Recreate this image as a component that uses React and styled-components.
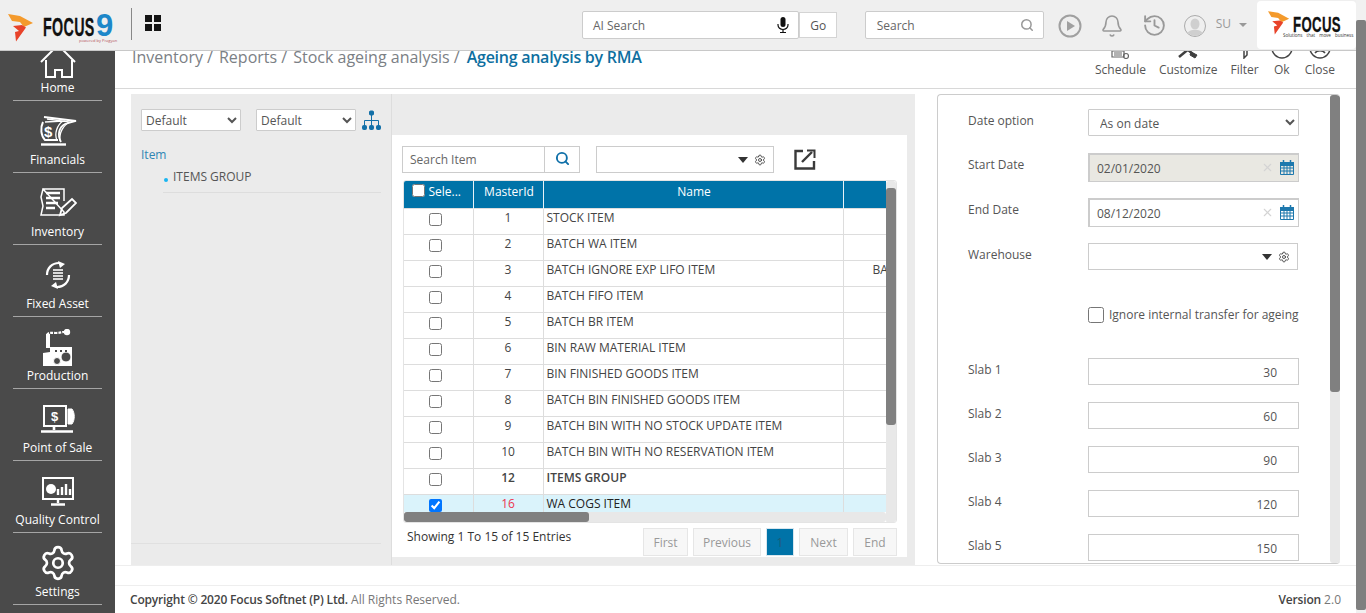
import React from "react";
import styled, { createGlobalStyle } from "styled-components";
import { Bell, History, Search, Settings, X } from "lucide-react";

const Global = createGlobalStyle`
  * { box-sizing: border-box; }
  html, body { margin: 0; padding: 0; height: 100%; overflow: hidden; background: #fff; }
  body { font-family: "Open Sans", "Liberation Sans", sans-serif; font-size: 12px; color: #444; }
`;

const Page = styled.div`display: flex; width: 1366px; height: 613px; overflow: hidden;`;
const Shell = styled.div`flex: 1; min-width: 0; display: flex; flex-direction: column;`;
const PageTrack = styled.div`width: 10px; background: #f1f1f1; padding-top: 20px;`;
const PageThumb = styled.div`height: 590px; background: #7f7f7f; border-radius: 2px;`;

/* header */
const Header = styled.header`
  position: relative; z-index: 2; height: 51px; flex: none; background: #efefef; border-bottom: 1px solid #c8c8c8;
  display: flex; align-items: center;
`;
const BrandBox = styled.div`position: relative; width: 115px; flex: none; padding-left: 8px; display: flex; align-items: flex-start; height: 50px; padding-top: 14px;`;
const BrandWord = styled.span`
  display: inline-block; width: ${p => p.$w}px; margin-left: ${p => p.$ml}px; margin-top: ${p => p.$mt || 0}px; white-space: nowrap;
  font: 700 ${p => p.$size}px/${p => p.$lh}px "Liberation Sans", sans-serif; color: #111; letter-spacing: .6px;
  -webkit-text-stroke: .3px #111; transform: scaleX(${p => p.$sx}); transform-origin: left center;
`;
const Nine = styled.span`
  font: 700 31px/22px "Liberation Sans", sans-serif; color: #1d87c9; margin-left: 3px; margin-top: 1px;
`;
const Powered = styled.span`
  position: absolute; left: 79px; top: 38px; font-size: 4px; line-height: 5px; color: #b5525a; white-space: nowrap;
`;
const HeadDivider = styled.div`width: 1px; height: 32px; background: #888; margin-left: 16px; margin-bottom: 3px;`;
const AppGrid = styled.div`
  margin-left: 13px; margin-bottom: 5px; width: 16px; height: 16px; display: grid; grid-template-columns: 7px 7px; grid-auto-rows: 7px; gap: 2px;
  & > i { display: block; background: #151515; }
`;
const Field = styled.div`
  display: flex; align-items: center; width: ${p => p.$w}px; height: 28px; margin-left: ${p => p.$ml || 0}px; flex: none;
  background: #fff; border: 1px solid #ccc; border-radius: 2px; padding: 0 ${p => p.$pr || 10}px 0 ${p => p.$pl || 10}px; color: #666; font-size: 12px;
  & > span { flex: 1; }
`;
const GoButton = styled.div`
  width: 38px; height: 26px; padding-left: 1px; background: #fff; border: 1px solid #d4d4d4; display: flex; align-items: center; justify-content: center; color: #555; font-size: 12px;
`;
const HeadIcon = styled.div`margin-left: ${p => p.$ml}px; display: flex; color: #999; flex: none; margin-top: 1px;`;
const UserName = styled.span`margin-left: 10px; color: #999; font-size: 12px; margin-bottom: 3px;`;
const Caret = styled.i`
  display: block; width: 0; height: 0; margin-left: ${p => p.$ml}px; flex: none;
  border-left: ${p => p.$w}px solid transparent; border-right: ${p => p.$w}px solid transparent; border-top: ${p => p.$h}px solid ${p => p.$c};
`;
const LogoCard = styled.div`
  position: relative; margin-left: 10px; width: 99px; height: 48px; background: #fff; border-radius: 4px; flex: none; padding: 10px 0 0 11px; display: flex; align-items: flex-start;
`;
const Tagline = styled.span`position: absolute; left: 26px; top: 32px; font-size: 4.5px; line-height: 5px; color: #333; white-space: nowrap; word-spacing: 3px;`;

/* body */
const Body = styled.div`flex: 1; min-height: 0; display: flex;`;
const Sidebar = styled.nav`
  width: 115px; flex: none; background: #4a4a4a; display: flex; flex-direction: column; justify-content: flex-end; overflow: hidden; padding: 0 13px 8px;
`;
const NavItem = styled.div`
  height: 72px; flex: none; display: flex; flex-direction: column; align-items: center; justify-content: flex-end; border-bottom: 1px solid #a5a5a5; color: #fff;
`;
const NavIcon = styled.div`height: 38px; display: flex; align-items: ${p => p.$align || "center"}; justify-content: center; color: #fff;`;
const NavLabel = styled.span`font-size: 12px; line-height: 16px; margin: 2px -12px 4px; white-space: nowrap;`;

const Main = styled.main`flex: 1; min-width: 0; display: flex; flex-direction: column; background: #fff;`;
const TitleBar = styled.div`
  height: 38px; flex: none; display: flex; justify-content: space-between; align-items: flex-start; border-bottom: 1px solid #d8d8d8; padding: 0 21px 0 17px;
`;
const Crumbs = styled.div`display: flex; gap: 6px; font-size: 16px; line-height: 12px; color: #7b8085; white-space: nowrap;`;
const CrumbActive = styled.span`color: #0e6f9f; font-weight: 600; letter-spacing: -.26px; margin-left: 1px;`;
const Actions = styled.div`height: 37px; overflow: hidden; display: flex; gap: 12px; align-items: flex-end; padding-bottom: 10px;`;
const Action = styled.div`
  display: flex; flex-direction: column; align-items: center; color: #555; font-size: 12px; line-height: 16px; gap: 3px; margin-right: ${p => p.$mr || 0}px;
  & > svg { flex: none; }
`;

const Content = styled.div`
  height: 477px; flex: none; padding: 5px 0 0 16px; display: flex; gap: 22px; border-bottom: 1px solid #eee;
`;
const LeftPanel = styled.section`width: 784px; height: 471px; flex: none; background: #ebebeb; display: flex;`;
const TreePane = styled.div`width: 261px; flex: none; border-right: 1px solid #ddd; display: flex; flex-direction: column; padding: 15px 10px 0 10px;`;
const TreeTools = styled.div`display: flex; align-items: center; gap: 15px;`;
const NativeSelect = styled.select`
  width: ${p => p.$w}px; height: ${p => p.$h}px; flex: none; background: #fff; border: 1px solid #ccc; border-radius: 1px; font: 12px "Open Sans", sans-serif; color: #555; padding: ${p => p.$pt || 0}px 0 0 ${p => p.$pl}px; outline: none;
`;
const TreeRoot = styled.div`color: #2f86b4; margin-top: 15px; line-height: 18px;`;
const TreeChild = styled.div`
  margin: 4px 0 0 22px; height: 25px; padding: 0 0 0 10px; line-height: 18px; border-bottom: 1px solid #ddd; color: #555; position: relative;
  &::before { content: ""; position: absolute; left: 1px; top: 10px; width: 4px; height: 4px; border-radius: 50%; background: #19b5f1; }
`;
const TreeFoot = styled.div`margin: auto 0 21px -10px; border-top: 1px solid #e0e0e0;`;

const GridPane = styled.div`flex: 1; min-width: 0; padding: 41px 8px 8px 0;`;
const GridCard = styled.div`height: 422px; background: #fff; padding: 11px 10px 0 10px; display: flex; flex-direction: column;`;
const GridTools = styled.div`display: flex; align-items: center; height: 27px; flex: none;`;
const SearchBox = styled.div`width: 178px; height: 27px; flex: none; display: flex; border: 1px solid #ccc; color: #666; & > span { flex: 1; line-height: 25px; padding-left: 7px; border-right: 1px solid #ccc; }`;
const SearchBtn = styled.div`width: 34px; display: flex; align-items: center; justify-content: center; color: #0e6fa8; margin-top: -2px;`;
const Combo = styled.div`
  width: ${p => p.$w}px; height: 27px; margin-left: ${p => p.$ml || 0}px; flex: none; display: flex; align-items: center; justify-content: flex-end; gap: 6px; background: #fff; border: 1px solid #ccc; padding-right: 7px; color: #444;
`;
const Frame = styled.div`
  margin: 7px 0 0 1px; flex: none; height: 343px; border: 1px solid #e4e4e4; border-radius: 3px; display: grid; grid-template-columns: 1fr 10px; grid-template-rows: 331px 11px; overflow: hidden;
`;
const TableView = styled.div`overflow: hidden;`;
const Table = styled.table`width: 639px; table-layout: fixed; border-collapse: collapse;`;
const Th = styled.th`
  height: 27px; padding: 0 2px 5px 4px; background: #0073a8; color: #fff; font-weight: 400; font-size: 12px; border-right: 1px solid #e8f2f7; white-space: nowrap; text-align: center; vertical-align: middle;
`;
const Td = styled.td`
  height: 26px; padding: 0 3px 7px; border: 1px solid #ddd; border-left: 0; color: ${p => p.$sel ? "#222" : "#444"}; background: ${p => p.$sel ? "#daf3fb" : "#fff"}; font-weight: ${p => p.$bold ? 600 : 400}; text-align: ${p => p.$center ? "center" : "left"}; white-space: nowrap; overflow: hidden; vertical-align: middle; line-height: 16px;
`;
const IdCell = styled(Td)`color: ${p => p.$sel ? "#ec3350" : "#444"};`;
const ExtraCell = styled(Td)`padding-left: 29px;`;
const RowCheck = styled.input`width: 13px; height: 13px; display: block; margin: 4px auto 1px; position: relative; left: -3px;`;
const HeadCheck = styled.input`margin: 0 3px 4px -5px; width: 13px; height: 13px; vertical-align: middle;`;

const VTrack = styled.div`grid-row: 1 / 3; grid-column: 2; background: #e8e8e8; border-radius: 3px; padding-top: 7px;`;
const HTrack = styled.div`background: #e8e8e8; border-radius: 3px; height: 10px;`;
const Thumb = styled.div`background: #808080; border-radius: 3px; height: ${p => p.$h}; width: ${p => p.$w};`;

const PagerRow = styled.div`display: flex; justify-content: space-between; margin: 5px 0 0 5px;`;
const Showing = styled.span`color: #333; line-height: 16px; margin-top: 1px;`;
const Pager = styled.div`display: flex; gap: 5px;`;
const PageBtn = styled.div`
  height: 28px; width: ${p => p.$w}px; flex: none; display: flex; align-items: center; justify-content: center; font-size: 12px;
  background: ${p => p.$on ? "#0073a8" : "#f7f7f7"}; border: 1px solid ${p => p.$on ? "#d8e6ee" : "#e6e6e6"}; color: ${p => p.$on ? "#1f5a78" : "#999"};
`;

const RightPanel = styled.section`
  width: 403px; height: 470px; flex: none; display: flex; border: 1px solid #ccc; border-radius: 4px; overflow: hidden; border-right: 0;
`;
const Form = styled.div`flex: 1; min-width: 0; padding: 14px 0 0 30px;`;
const FormRow = styled.div`display: grid; grid-template-columns: 120px 211px; margin-bottom: ${p => p.$gap}px;`;
const Label = styled.span`line-height: 22px; padding-top: 1px; color: #555;`;
const DateField = styled.div`
  height: 29px; display: flex; align-items: center; padding: 1px 4px 0 7px; gap: 6px; color: #555; border: 1px solid #ccc; border-left-width: 2px; border-top-width: 2px;
  background: ${p => p.$off ? "#e9e8e2" : "#fff"}; & > span { flex: 1; } & > svg { margin-top: -3px; }
`;
const CheckLabel = styled.label`display: flex; align-items: flex-start; gap: 5px; height: 17px; color: #555; white-space: nowrap; line-height: 16px;`;
const BigCheck = styled.input`margin: 0; width: 16px; height: 16px; flex: none;`;
const NumField = styled.div`height: 27px; border: 1px solid #ccc; text-align: right; padding: 5px 21px 0 0; line-height: 18px; color: #555; background: #fff;`;
const FormTrack = styled.div`width: 10px; flex: none; background: #e8e8e8; border-radius: 3px;`;

const Footer = styled.footer`
  margin-top: 19px; flex: 1; display: flex; justify-content: space-between; align-items: center; padding: 0 15px; border-top: 1px solid #eee; color: #777; font-size: 12px;
`;
const Strong = styled.b`font-weight: 600; color: #444; letter-spacing: -.18px;`;

/* drawings */
const Flame = ({ w = 26, h = 28 }) => (
  <svg width={w} height={h} viewBox="0 0 26 28" style={{ flex: "none" }}>
    <path d="M0 0 L12 2 L25 9 L16 13 L12 8 L4 7 Z" fill="#f49a2c" />
    <path d="M5 12 L14 11 L18 13.500 L8 27.500 L7 18 L11 17 Z" fill="#e8432a" />
  </svg>
);
const MicIcon = () => (
  <svg width="12" height="16" viewBox="0 0 12 16" fill="none" stroke="#111" style={{ flex: "none" }}>
    <rect x="3.500" y="0" width="5" height="10" rx="2.500" fill="#111" stroke="none" />
    <path d="M1 7V8A5 4.500 0 0 0 11 8V7M6 13V15M3 15.500H9" strokeWidth="1.200" />
  </svg>
);
const Gear = ({ s = 12 }) => <Settings size={s} strokeWidth={1.8} color="#444" />;
const Down = () => <Caret $ml={0} $w={5.5} $h={6} $c="#333" />;
const Calendar = () => (
  <svg width="14" height="15" viewBox="0 0 14 15" style={{ flex: "none" }} fill="none" stroke="#1d78ad">
    <path d="M0 2.500h14v3H0z" fill="#1d78ad" />
    <path d="M3.500 0v3M10.500 0v3" strokeWidth="1.500" />
    <path d="M.5 5v9.500h13V5M4 5v9.500M7 5v9.500M10 5v9.500M.5 8h13M.5 11h13" strokeWidth="1" />
  </svg>
);
const ClearX = () => <X size={13} color="#d4d4d4" strokeWidth={2} style={{ flex: "none" }} />;

const HomeIcon = () => (
  <svg width="38" height="38" viewBox="0 0 38 38" fill="none" stroke="#fff" strokeWidth="2">
    <path d="M2 22 L19 5 L36 22M7 20V37H16V30H23V37H33V20" />
  </svg>
);
const FinIcon = () => (
  <svg width="38" height="30" viewBox="0 0 38 30" fill="none" stroke="#fff" strokeWidth="1.600">
    <path d="M2 28.500H27" strokeWidth="2.400" />
    <path d="M4 6C1 12 2 20 6 24H19" strokeWidth="2" />
    <path d="M5 1L37 5 26 8C20 11 18 19 22 26" strokeWidth="1.800" />
    <path d="M6 6L24 5C18 9 15 18 18 24M8 3L31 6C24 9 20 17 21 25" strokeWidth="1.300" />
    <text x="5" y="21" fontFamily="Liberation Sans" fontWeight="700" fontSize="15" fill="#fff" stroke="none">$</text>
  </svg>
);
const InvIcon = () => (
  <svg width="38" height="31" viewBox="0 0 38 31" fill="none" stroke="#fff" strokeWidth="1.500">
    <path d="M4 1H25V13M25 24V27H2L4 18 2 9 4 1Z" />
    <path d="M7 5H21M7 10H21M7 15H19M7 20H16" strokeWidth="2.500" />
    <path d="M21 27L23 20 33 11 37 15 27 25Z" strokeWidth="1.800" />
  </svg>
);
const FixedIcon = () => (
  <svg width="26" height="28" viewBox="0 0 26 28" fill="none" stroke="#fff">
    <path d="M2 14C2 7 7 2 14 2" strokeWidth="2.200" />
    <path d="M13 0L20 3 15 7Z" fill="#fff" stroke="none" />
    <path d="M24 14C24 21 19 26 12 26" strokeWidth="2.200" />
    <path d="M13 28L6 25 11 21Z" fill="#fff" stroke="none" />
    <path d="M8 9H18M8 12H18M8 15H18M8 18H18" strokeWidth="2" stroke="#d8d8d8" />
  </svg>
);
const ProdIcon = () => (
  <svg width="32" height="37" viewBox="0 0 32 37">
    <path d="M4 5H8V19H4Z" fill="#fff" />
    <path d="M5 6C6 3 10 4 14 4S20 3 22 3" stroke="#fff" strokeWidth="2.200" fill="none" strokeDasharray="3 1" />
    <circle cx="25" cy="3" r="3.200" fill="#fff" />
    <path d="M1 24V37H30V18H8V23Z" fill="#fff" />
    <circle cx="24" cy="28" r="5" fill="#4a4a4a" stroke="#fff" strokeWidth="1" />
    <circle cx="15" cy="32" r="3.500" fill="#4a4a4a" stroke="#fff" strokeWidth="1" />
    <path d="M13 22h2M18 22h2M23 22h2" stroke="#4a4a4a" strokeWidth="2" />
  </svg>
);
const PosIcon = () => (
  <svg width="36" height="28" viewBox="0 0 36 28" fill="none" stroke="#fff">
    <path d="M4 1H26V21H4Z" strokeWidth="2" />
    <path d="M28 4H32C35 8 35 15 32 19H28Z" fill="#fff" strokeWidth="1" />
    <path d="M14 21V25M1 26.500H33" strokeWidth="2.600" />
    <text x="11" y="16" fontFamily="Liberation Sans" fontWeight="700" fontSize="13" fill="#fff" stroke="none">$</text>
  </svg>
);
const QualityIcon = () => (
  <svg width="32" height="29" viewBox="0 0 32 29" fill="none" stroke="#fff">
    <path d="M1 1H31V22H1Z" strokeWidth="2" />
    <circle cx="9" cy="12" r="5" fill="#fff" stroke="none" />
    <path d="M16 18V12M20 18V10M24 18V7M28 18V12" strokeWidth="2.400" />
    <path d="M16 23V26M9 27.500H23" strokeWidth="2.400" />
  </svg>
);
const PlayIcon = () => (
  <svg width="24" height="24" viewBox="0 0 24 24" fill="none" stroke="#a0a0a0" strokeWidth="2">
    <circle cx="12" cy="12" r="10.500" />
    <path d="M9 7L17 12 9 17Z" fill="#a0a0a0" stroke="none" />
  </svg>
);
const Avatar = () => (
  <svg width="22" height="22" viewBox="0 0 22 22">
    <circle cx="11" cy="11" r="10.500" fill="#efefef" stroke="#aaa" />
    <clipPath id="av"><circle cx="11" cy="11" r="10" /></clipPath>
    <g clipPath="url(#av)" fill="#cfcfcf">
      <ellipse cx="11" cy="9" rx="4.500" ry="5.500" />
      <path d="M2 22C3 15 8 15 11 15S19 15 20 22Z" />
    </g>
  </svg>
);
const TreeIcon = () => (
  <svg width="19" height="21" viewBox="0 0 19 21" fill="#1370a8" stroke="#1370a8" style={{ flex: "none", marginLeft: -9 }}>
    <rect x="7.500" y="1" width="4" height="4" rx="1" />
    <path d="M9.500 5V15M2.500 15V10.500H16.500V15" fill="none" />
    <rect x="0.500" y="15.500" width="4" height="4" rx="1" />
    <rect x="7.500" y="15.500" width="4" height="4" rx="1" />
    <rect x="14.500" y="15.500" width="4" height="4" rx="1" />
  </svg>
);
const ExportIcon = () => (
  <svg width="22" height="21" viewBox="0 0 22 21" fill="none" stroke="#3a3a3a" strokeWidth="2.400" style={{ marginLeft: 20, flex: "none" }}>
    <path d="M9 2H1.500V19.500H20V12" />
    <path d="M8 13L18 3" />
    <path d="M13 1.500H20.500V9" strokeWidth="2" />
  </svg>
);
const ScheduleIcon = () => (
  <svg width="18" height="22" viewBox="0 0 18 22" fill="none" stroke="#666" strokeWidth="1.200">
    <path d="M1 14H13V20H1ZM3 16h8M3 18h8" />
    <circle cx="15" cy="19" r="2.500" />
  </svg>
);
const CustomizeIcon = () => (
  <svg width="20" height="24" viewBox="0 0 20 24" fill="#3f3f3f" stroke="#3f3f3f">
    <path d="M1 22L18 8" strokeWidth="2.500" />
    <path d="M2 8L16 20" strokeWidth="2.500" />
    <path d="M13 17L19 20 17 23 12 20Z" />
  </svg>
);
const FilterIcon = () => (
  <svg width="14" height="24" viewBox="0 0 14 24" fill="none" stroke="#444" strokeWidth="1.500">
    <path d="M2 4L6 12V23L9 20V12L12 4" />
  </svg>
);
const OkIcon = () => (
  <svg width="22" height="22" viewBox="0 0 22 22" fill="none" stroke="#444" strokeWidth="1.500">
    <circle cx="11" cy="11" r="10" />
  </svg>
);
const CloseIcon = () => (
  <svg width="22" height="22" viewBox="0 0 22 22" fill="none" stroke="#444" strokeWidth="1.500">
    <circle cx="11" cy="11" r="10" />
    <path d="M6 16C8 13 14 13 16 16" />
  </svg>
);

const navItems = [
  ["Home", <HomeIcon />, "flex-end"],
  ["Financials", <FinIcon />],
  ["Inventory", <InvIcon />],
  ["Fixed Asset", <FixedIcon />],
  ["Production", <ProdIcon />],
  ["Point of Sale", <PosIcon />],
  ["Quality Control", <QualityIcon />],
  ["Settings", <Settings size={38} strokeWidth={1.7} />],
];
const rows = [
  [1, "STOCK ITEM"], [2, "BATCH WA ITEM"], [3, "BATCH IGNORE EXP LIFO ITEM", "BATCH"],
  [4, "BATCH FIFO ITEM"], [5, "BATCH BR ITEM"], [6, "BIN RAW MATERIAL ITEM"],
  [7, "BIN FINISHED GOODS ITEM"], [8, "BATCH BIN FINISHED GOODS ITEM"],
  [9, "BATCH BIN WITH NO STOCK UPDATE ITEM"], [10, "BATCH BIN WITH NO RESERVATION ITEM"],
  [12, "ITEMS GROUP", "", "bold"], [16, "WA COGS ITEM", "", "sel"],
];
const slabs = [["Slab 1", 30], ["Slab 2", 60], ["Slab 3", 90], ["Slab 4", 120], ["Slab 5", 150]];
const pages = [["First", 45], ["Previous", 68], ["1", 28, true], ["Next", 49], ["End", 44]];

export default function App() {
  return (
    <Page>
      <Global />
      <Shell>
        <Header>
          <BrandBox>
            <Flame />
            <BrandWord $w={50} $ml={9} $mt={3} $size={26} $lh={20} $sx={0.55}>FOCUS</BrandWord>
            <Nine>9</Nine>
            <Powered>powered by Pragyan</Powered>
          </BrandBox>
          <HeadDivider />
          <AppGrid><i /><i /><i /><i /></AppGrid>
          <Field $w={217} $ml={421} $pr={9}>
            <span>AI Search</span>
            <MicIcon />
          </Field>
          <GoButton>Go</GoButton>
          <Field $w={179} $ml={28} $pl={11} $pr={9}>
            <span>Search</span>
            <Search size={14} color="#999" strokeWidth={2.6} />
          </Field>
          <HeadIcon $ml={14}><PlayIcon /></HeadIcon>
          <HeadIcon $ml={18}><Bell size={24} strokeWidth={1.6} /></HeadIcon>
          <HeadIcon $ml={18}><History size={25} strokeWidth={1.8} /></HeadIcon>
          <HeadIcon $ml={17}><Avatar /></HeadIcon>
          <UserName>SU</UserName>
          <Caret $ml={8} $w={4} $h={4} $c="#999" />
          <LogoCard>
            <Flame w={22} h={24} />
            <BrandWord $w={46} $ml={3} $mt={5} $size={22} $lh={17} $sx={0.6}>FOCUS</BrandWord>
            <Tagline>Solutions that move business</Tagline>
          </LogoCard>
        </Header>
        <Body>
          <Sidebar>
            {navItems.map(([label, icon, align]) => (
              <NavItem key={label}>
                <NavIcon $align={align}>{icon}</NavIcon>
                <NavLabel>{label}</NavLabel>
              </NavItem>
            ))}
          </Sidebar>
          <Main>
            <TitleBar>
              <Crumbs>
                <span>Inventory /</span>
                <span>Reports /</span>
                <span>Stock ageing analysis /</span>
                <CrumbActive>Ageing analysis by RMA</CrumbActive>
              </Crumbs>
              <Actions>
                <Action $mr={1}><ScheduleIcon />Schedule</Action>
                <Action $mr={1}><CustomizeIcon />Customize</Action>
                <Action><FilterIcon />Filter</Action>
                <Action><OkIcon />Ok</Action>
                <Action><CloseIcon />Close</Action>
              </Actions>
            </TitleBar>
            <Content>
              <LeftPanel>
                <TreePane>
                  <TreeTools>
                    <NativeSelect $w={100} $h={22} $pl={0} defaultValue="Default"><option>Default</option></NativeSelect>
                    <NativeSelect $w={100} $h={22} $pl={0} defaultValue="Default"><option>Default</option></NativeSelect>
                    <TreeIcon />
                  </TreeTools>
                  <TreeRoot>Item</TreeRoot>
                  <TreeChild>ITEMS GROUP</TreeChild>
                  <TreeFoot />
                </TreePane>
                <GridPane>
                  <GridCard>
                    <GridTools>
                      <SearchBox>
                        <span>Search Item</span>
                        <SearchBtn><Search size={15} strokeWidth={3} /></SearchBtn>
                      </SearchBox>
                      <Combo $w={178} $ml={16}><Down /><Gear /></Combo>
                      <ExportIcon />
                    </GridTools>
                    <Frame>
                      <TableView>
                        <Table>
                          <colgroup>
                            <col width="69" /><col width="70" /><col width="300" /><col width="200" />
                          </colgroup>
                          <thead>
                            <tr>
                              <Th><HeadCheck type="checkbox" />Sele...</Th>
                              <Th>MasterId</Th>
                              <Th>Name</Th>
                              <Th />
                            </tr>
                          </thead>
                          <tbody>
                            {rows.map(([id, name, extra, kind]) => {
                              const sel = kind === "sel";
                              const bold = kind === "bold";
                              return (
                                <tr key={id}>
                                  <Td $center $sel={sel}><RowCheck type="checkbox" defaultChecked={sel} /></Td>
                                  <IdCell $center $sel={sel} $bold={bold}>{id}</IdCell>
                                  <Td $sel={sel} $bold={bold}>{name}</Td>
                                  <ExtraCell $sel={sel}>{extra}</ExtraCell>
                                </tr>
                              );
                            })}
                          </tbody>
                        </Table>
                      </TableView>
                      <VTrack><Thumb $h="237px" $w="100%" /></VTrack>
                      <HTrack><Thumb $h="100%" $w="185px" /></HTrack>
                    </Frame>
                    <PagerRow>
                      <Showing>Showing 1 To 15 of 15 Entries</Showing>
                      <Pager>
                        {pages.map(([t, w, on]) => <PageBtn key={t} $w={w} $on={on}>{t}</PageBtn>)}
                      </Pager>
                    </PagerRow>
                  </GridCard>
                </GridPane>
              </LeftPanel>
              <RightPanel>
                <Form>
                  <FormRow $gap={17}>
                    <Label>Date option</Label>
                    <NativeSelect $w={211} $h={27} $pl={7} $pt={2} defaultValue="As on date"><option>As on date</option></NativeSelect>
                  </FormRow>
                  <FormRow $gap={16}>
                    <Label>Start Date</Label>
                    <DateField $off><span>02/01/2020</span><ClearX /><Calendar /></DateField>
                  </FormRow>
                  <FormRow $gap={16}>
                    <Label>End Date</Label>
                    <DateField><span>08/12/2020</span><ClearX /><Calendar /></DateField>
                  </FormRow>
                  <FormRow $gap={37}>
                    <Label>Warehouse</Label>
                    <Combo $w={210}><Down /><Gear /></Combo>
                  </FormRow>
                  <FormRow $gap={34}>
                    <span />
                    <CheckLabel><BigCheck type="checkbox" />Ignore internal transfer for ageing</CheckLabel>
                  </FormRow>
                  {slabs.map(([l, v]) => (
                    <FormRow key={l} $gap={17}>
                      <Label>{l}</Label>
                      <NumField>{v}</NumField>
                    </FormRow>
                  ))}
                </Form>
                <FormTrack><Thumb $h="297px" $w="100%" /></FormTrack>
              </RightPanel>
            </Content>
            <Footer>
              <span><Strong>Copyright © 2020 Focus Softnet (P) Ltd.</Strong> All Rights Reserved.</span>
              <span><Strong>Version</Strong> 2.0</span>
            </Footer>
          </Main>
        </Body>
      </Shell>
      <PageTrack><PageThumb /></PageTrack>
    </Page>
  );
}
